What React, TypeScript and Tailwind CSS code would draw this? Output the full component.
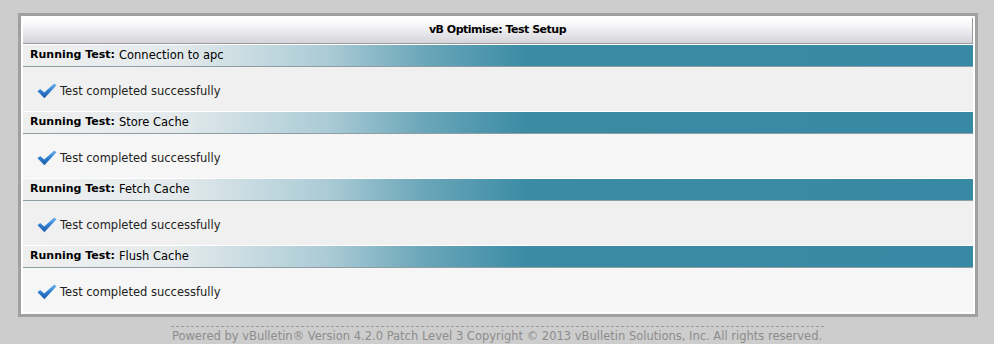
const tests = ["Connection to apc", "Store Cache", "Fetch Cache", "Flush Cache"];

function CheckIcon() {
  return (
    <svg width="20" height="16" viewBox="0 0 20 16" className="shrink-0">
      <defs>
        <linearGradient id="chk" x1="0" y1="0" x2="0" y2="1">
          <stop offset="0" stopColor="#6bb4ee" />
          <stop offset="0.5" stopColor="#2f7fd0" />
          <stop offset="1" stopColor="#1b5aa3" />
        </linearGradient>
      </defs>
      <path
        d="M0.5 8.2 L3.2 6 L7.2 9.4 L17.2 0.6 L19.5 2.2 L7.4 15.2 Z"
        fill="url(#chk)"
      />
    </svg>
  );
}

export default function App() {
  return (
    <div
      className="w-[994px] h-[344px] bg-[#cdcdcd] pt-[13px] text-[11.5px] text-black"
      style={{ fontFamily: '"DejaVu Sans", Verdana, sans-serif' }}
    >
      <div className="ml-[18px] w-[960px] border-[3px] border-[#a0a0a0] bg-white p-[2px]">
        <div className="h-[26px] flex items-center justify-center font-bold text-[11px] tracking-[-0.5px] border-b border-r border-[#9a9a9a] bg-[linear-gradient(to_bottom,#ffffff_0%,#f4f4f6_35%,#d4d4da_100%)]">
          vB Optimise: Test Setup
        </div>
        {tests.map((t, i) => (
          <div key={t}>
            <div className="h-[23px] flex items-center pl-[7px] border-t border-t-white border-b border-b-[#8f9ea3] bg-[linear-gradient(to_right,#efefef_0%,#e4eaec_16%,#abcbd6_32%,#6ca7ba_42%,#3b8ba5_53%,#3889a3_100%)]">
              <span className="font-bold text-[11px] mr-[4px]">Running Test:</span>
              {t}
            </div>
            <div
              className={
                "h-[44px] flex items-center pl-[14px] pt-[3px] gap-[3px] " +
                (i % 2 === 0 ? "bg-[#f0f0f0]" : "bg-[#f6f6f6]")
              }
            >
              <CheckIcon />
              <span className="mt-[3px] text-[#222]">Test completed successfully</span>
            </div>
          </div>
        ))}
      </div>
      <div className="mt-[9px] mx-auto w-[653px] border-t border-dashed border-[#9a9a9a] text-center text-[#8c8c8c] leading-[18px] text-[11.5px] whitespace-nowrap">
        Powered by vBulletin® Version 4.2.0 Patch Level 3 Copyright © 2013 vBulletin Solutions, Inc. All rights reserved.
      </div>
    </div>
  );
}
